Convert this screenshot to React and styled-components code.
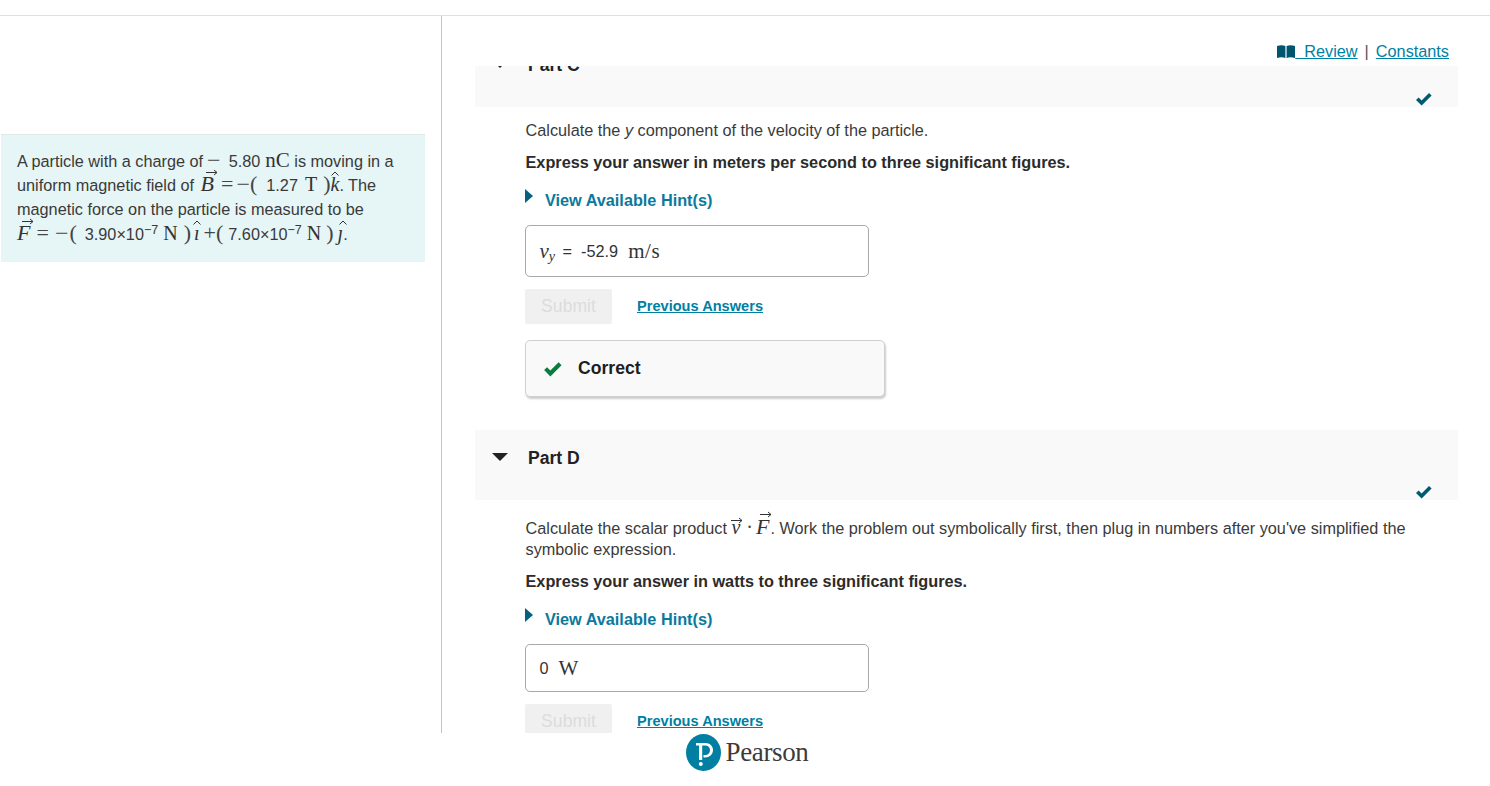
import React from 'react'
import styled, { createGlobalStyle } from 'styled-components'

const teal = '#007fa3'

const GlobalStyle = createGlobalStyle`
  html, body {
    margin: 0;
    padding: 0;
    background: #fff;
    overflow: hidden;
  }
  body {
    font-family: "Liberation Sans", Arial, sans-serif;
    font-size: 16.25px;
    color: #333;
  }
`

const Page = styled.div`
  height: 786px;
  display: flex;
  flex-direction: column;
`

const TopStrip = styled.div`
  height: 15px;
  flex: none;
  border-bottom: 1px solid #e0e0e0;
`

const Main = styled.div`
  height: 717px;
  flex: none;
  display: flex;
`

const LeftPane = styled.aside`
  width: 441px;
  flex: none;
  border-right: 1px solid #c4c4c4;
  padding-top: 118px;
`

const Intro = styled.div`
  width: 424px;
  height: 128px;
  margin-left: 1px;
  box-sizing: border-box;
  padding: 14px 16px 0 16px;
  background: #e6f5f6;
  border-top: 1px solid #e0e8e8;
  line-height: 24.2px;
  color: #3a3a3a;
`

const RightPane = styled.section`
  flex: 1;
  min-width: 0;
  display: flex;
  flex-direction: column;
`

const LinkBar = styled.div`
  height: 50px;
  flex: none;
  box-sizing: border-box;
  padding: 20px 41px 0 0;
  display: flex;
  justify-content: flex-end;
  align-items: center;
  color: #555;
  line-height: 18px;
`

const TopLink = styled.a`
  color: ${teal};
  text-decoration: underline;
`

const Pipe = styled.span`
  margin: 0 7px;
`

const Scroller = styled.div`
  flex: 1;
  min-height: 0;
  overflow: hidden;
  padding: 0 32px 0 33px;
`

const Inner = styled.div`
  margin-top: ${props => props.$offset}px;
`

const PartBar = styled.div`
  position: relative;
  height: 70px;
  background: #f9f9f9;
  display: flex;
  align-items: flex-start;
  padding: 18px 0 0 17px;
  box-sizing: border-box;
`

const PartTitle = styled.h3`
  margin: 0 0 0 20px;
  font-size: 17.6px;
  line-height: 20px;
  font-weight: bold;
  color: #222;
`

const BarCheck = styled.svg`
  position: absolute;
  right: 26px;
  bottom: 1px;
  width: 17px;
  height: 14px;
`

const DownCaret = styled.svg`
  width: 16px;
  height: 9px;
  margin-top: 5px;
`

const PartBody = styled.div`
  padding-left: 50px;
  padding-bottom: ${props => props.$bottom || 0}px;
`

const Para = styled.p`
  margin: ${props => props.$top}px 0 0;
  padding-left: 0.5px;
  line-height: 21px;
  font-weight: ${props => (props.$bold ? 'bold' : 'normal')};
  color: ${props => (props.$bold ? '#2b2b2b' : '#3a3a3a')};
`

const HintRow = styled.div`
  margin-top: ${props => props.$top}px;
  display: flex;
  align-items: flex-start;
  height: 21px;
  color: #0a7a9c;
  font-weight: bold;
`

const HintCaret = styled.svg`
  width: 8px;
  height: 16px;
  margin-right: 12px;
  margin-top: -1px;
`

const HintLabel = styled.span`
  line-height: 21px;
`

const AnswerBox = styled.div`
  width: 344px;
  height: ${props => props.$height}px;
  margin-top: ${props => props.$top}px;
  box-sizing: border-box;
  border: 1px solid #a9a9a9;
  border-radius: 5px;
  display: flex;
  align-items: center;
  padding-left: 13.5px;
  color: #333;
`

const ActionRow = styled.div`
  margin-top: 12px;
  display: flex;
  align-items: center;
`

const SubmitBtn = styled.button`
  width: 87px;
  height: 35px;
  border: 0;
  border-radius: 2px;
  background: #f0f0f0;
  color: #dcdcdc;
  font: 17.6px "Liberation Sans", Arial, sans-serif;
  padding: 0;
`

const PrevLink = styled.a`
  margin: -2px 0 0 25px;
  color: ${teal};
  font-size: 14.6px;
  font-weight: bold;
  text-decoration: underline;
`

const Feedback = styled.div`
  width: 360px;
  height: 57px;
  margin-top: 16px;
  box-sizing: border-box;
  background: #f9f9f9;
  border: 1px solid #cfcfcf;
  border-radius: 5px;
  box-shadow: 1px 2px 2px rgba(0, 0, 0, 0.2);
  display: flex;
  align-items: center;
  padding-left: 17px;
  font-size: 17.6px;
  font-weight: bold;
  color: #1e1e1e;
`

const FeedbackCheck = styled.svg`
  width: 19px;
  height: 16px;
  margin-right: 16px;
`

const Footer = styled.footer`
  flex: 1;
  display: flex;
  align-items: flex-start;
  justify-content: center;
  padding-left: 5px;
`

const Logo = styled.svg`
  width: 35px;
  height: 37px;
  margin-top: 1px;
  margin-right: 4px;
`

const Wordmark = styled.span`
  font-family: "Liberation Serif", "Times New Roman", serif;
  font-size: 27px;
  letter-spacing: -0.35px;
  line-height: 38px;
  color: #3e3a39;
`

const BookIcon = styled.svg`
  width: 18px;
  height: 13px;
  vertical-align: -1px;
`

/* math bits */
const Serif = styled.span`
  font-family: "Liberation Serif", "Times New Roman", serif;
  font-size: ${props => props.$size || 20}px;
  font-style: ${props => (props.$italic ? 'italic' : 'normal')};
  letter-spacing: ${props => props.$track || 0}px;
  line-height: ${props => (props.$boxed ? 1 : 0)};
  margin-left: ${props => props.$ml || 0}px;
  margin-right: ${props => props.$mr || 0}px;
  color: #333;
`

const Op = styled(Serif).attrs(props => ({ $size: props.$size || 22 }))`
  color: #444;
`

const Minus = styled(Serif).attrs({ $size: 24, children: '−' })`
  color: #444;
  vertical-align: -1px;
`

const Num = styled.span`
  margin-left: ${props => props.$ml || 0}px;
`

const Accented = styled.span`
  position: relative;
  display: inline-block;
  line-height: 1;
  margin-top: -4px;
  margin-left: ${props => props.$ml || 0}px;
`

const Accent = styled.svg`
  position: absolute;
  left: ${props => props.$left}px;
  top: ${props => props.$top}px;
  overflow: visible;
`

const Sup = styled.sup`
  font-size: 12.5px;
  line-height: 0;
  vertical-align: baseline;
  position: relative;
  top: -6px;
`

const Sub = styled.sub`
  font-size: 14px;
  line-height: 0;
  vertical-align: baseline;
  position: relative;
  top: 3px;
  margin-right: 3px;
`

const NoWrap = styled.span`
  white-space: nowrap;
`

const Vec = ({ children, left = 5, top = -4, ml, size = 22 }) => (
  <Accented $ml={ml}>
    <Serif $boxed $italic $mr={1} $size={size}>{children}</Serif>
    <Accent $left={left} $top={top} width="12" height="7" viewBox="0 0 12 7">
      <path d="M0 3.5 H11 M8 1 L11 3.5 L8 6" fill="none" stroke="#333" strokeWidth="1" />
    </Accent>
  </Accented>
)

const Hat = ({ children, left = 0, top = -3, ml }) => (
  <Accented $ml={ml}>
    <Serif $boxed $italic>{children}</Serif>
    <Accent $left={left} $top={top} width="8" height="5" viewBox="0 0 8 5">
      <path d="M0.5 4.5 L4 1 L7.5 4.5" fill="none" stroke="#333" strokeWidth="1" />
    </Accent>
  </Accented>
)

const CheckPath = 'M1 8 L3.6 5.4 L6.6 8.4 L14 1 L16.6 3.6 L6.6 13.6 Z'

const Caret = () => (
  <HintCaret viewBox="0 0 8 16">
    <path d="M0 0 L8 7 L0 14 Z" fill="#05617d" />
  </HintCaret>
)

const Part = ({ title }) => (
  <PartBar>
    <DownCaret viewBox="0 0 16 9">
      <path d="M0 0 H16 L8 8 Z" fill="#222" />
    </DownCaret>
    <PartTitle>{title}</PartTitle>
    <BarCheck viewBox="0 0 17 14">
      <path d={CheckPath} fill="#005a70" />
    </BarCheck>
  </PartBar>
)

const Actions = () => (
  <ActionRow>
    <SubmitBtn disabled>Submit</SubmitBtn>
    <PrevLink href="#">Previous Answers</PrevLink>
  </ActionRow>
)

export default function App() {
  return (
    <Page>
      <GlobalStyle />
      <TopStrip />
      <Main>
        <LeftPane>
          <Intro>
            A particle with a charge of<Minus $ml={4} /><Num $ml={8}>5.80</Num>
            <Serif $size={21} $ml={5}>nC</Serif> is moving in a uniform magnetic field of{' '}
            <Vec ml={2}>B</Vec><Op $ml={6}>=</Op><Minus $ml={3} /><Op>(</Op>
            <Num $ml={9}>1.27</Num>
            <Serif $ml={7}>T</Serif><Op $ml={6}>)</Op><Hat left={1}>k</Hat>. The magnetic force on the particle is measured to be{' '}
            <NoWrap>
              <Vec>F</Vec><Op $ml={5}>=</Op><Minus $ml={6} /><Op $ml={1}>(</Op>
              <Num $ml={8}>3.90×10<Sup>−7</Sup></Num>
              <Serif $ml={5}>N</Serif><Op $ml={6}>)</Op><Hat left={-1} ml={3}>ı</Hat><Op $ml={4}>+</Op><Op>(</Op>
              <Num $ml={5}>7.60×10<Sup>−7</Sup></Num>
              <Serif $ml={5}>N</Serif><Op $ml={5}>)</Op><Hat left={1} ml={4}>ȷ</Hat>.
            </NoWrap>
          </Intro>
        </LeftPane>
        <RightPane>
          <LinkBar>
            <TopLink href="#">
              <BookIcon viewBox="0 0 18 13">
                <path d="M0 1 C3 0 6 0 8.4 1 V13 C6 12 3 12 0 13 Z M9.6 1 C12 0 15 0 18 1 V13 C15 12 12 12 9.6 13 Z" fill="#00566e" />
              </BookIcon>
              &nbsp;&nbsp;Review
            </TopLink>
            <Pipe>|</Pipe>
            <TopLink href="#">Constants</TopLink>
          </LinkBar>
          <Scroller>
            <Inner $offset={-29}>
              <Part title="Part C" />
              <PartBody $bottom={33}>
                <Para $top={13}>Calculate the <i>y</i> component of the velocity of the particle.</Para>
                <Para $top={11} $bold>Express your answer in meters per second to three significant figures.</Para>
                <HintRow $top={17}><Caret /><HintLabel>View Available Hint(s)</HintLabel></HintRow>
                <AnswerBox $height={52} $top={14}>
                  <Serif $boxed $italic $size={21}>v<Sub>y</Sub></Serif>&nbsp;=&nbsp; -52.9
                  <Serif $boxed $ml={10} $size={21} $track={0.6}>m/s</Serif>
                </AnswerBox>
                <Actions />
                <Feedback>
                  <FeedbackCheck viewBox="0 0 17 14">
                    <path d={CheckPath} fill="#0a7d3e" />
                  </FeedbackCheck>
                  Correct
                </Feedback>
              </PartBody>
              <Part title="Part D" />
              <PartBody>
                <Para $top={18}>
                  Calculate the scalar product <Vec left={0} top={0} size={20}>v</Vec><Op $ml={5} $size={20}>·</Op><Vec ml={3} top={-5} left={4}>F</Vec>. Work the problem out symbolically first, then plug in numbers after you've simplified the symbolic expression.
                </Para>
                <Para $top={11} $bold>Express your answer in watts to three significant figures.</Para>
                <HintRow $top={17}><Caret /><HintLabel>View Available Hint(s)</HintLabel></HintRow>
                <AnswerBox $height={48} $top={14}>
                  0<Serif $boxed $ml={10} $size={21}>W</Serif>
                </AnswerBox>
                <Actions />
              </PartBody>
            </Inner>
          </Scroller>
        </RightPane>
      </Main>
      <Footer>
        <Logo viewBox="0 0 35 37">
          <ellipse cx="17.5" cy="18.5" rx="17.5" ry="18.5" fill={teal} />
          <path d="M10 9 H19 C24.5 9 27 12.5 27 16 C27 20.5 23.5 23.5 19 23.5 H17.5 V21 H19 C22 21 24 19 24 16 C24 13.5 22 11.6 19 11.6 H16.2 V26 H13 V11.6 H10 Z" fill="#fff" />
          <circle cx="14.8" cy="30" r="2" fill="#fff" />
        </Logo>
        <Wordmark>Pearson</Wordmark>
      </Footer>
    </Page>
  )
}
